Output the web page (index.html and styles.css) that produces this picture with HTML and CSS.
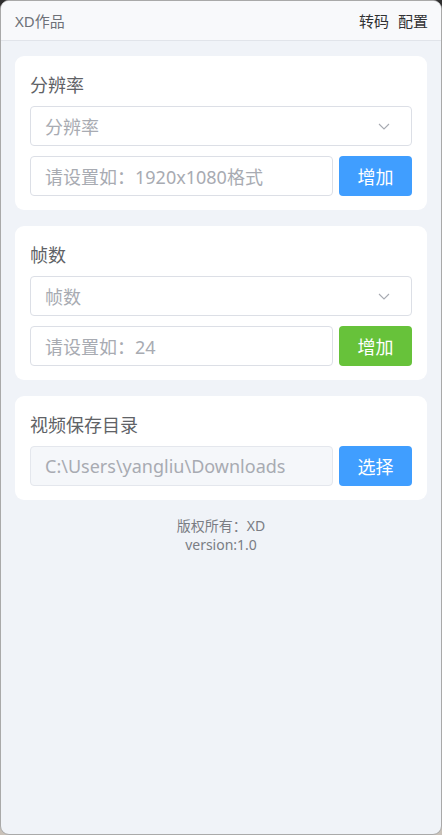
FILE: index.html
```html
<!DOCTYPE html>
<html lang="zh-CN">
<head>
<meta charset="utf-8">
<title>XD作品</title>
<link rel="stylesheet" href="styles.css">
</head>
<body>
<div class="window">
  <header class="topbar">
    <span class="brand">XD作品</span>
    <nav class="menu">
      <span class="menu-item">转码</span>
      <span class="menu-item">配置</span>
    </nav>
  </header>
  <main class="content">
    <section class="card">
      <div class="card-title">分辨率</div>
      <div class="select">
        <span class="placeholder">分辨率</span>
        <svg class="arrow" width="14" height="14" viewBox="0 0 14 14"><path d="M2 5l5 5 5-5" fill="none" stroke="#a8abb2" stroke-width="1.1"/></svg>
      </div>
      <div class="row">
        <div class="input"><span class="placeholder">请设置如：1920x1080格式</span></div>
        <button class="btn btn-blue">增加</button>
      </div>
    </section>
    <section class="card">
      <div class="card-title">帧数</div>
      <div class="select">
        <span class="placeholder">帧数</span>
        <svg class="arrow" width="14" height="14" viewBox="0 0 14 14"><path d="M2 5l5 5 5-5" fill="none" stroke="#a8abb2" stroke-width="1.1"/></svg>
      </div>
      <div class="row">
        <div class="input"><span class="placeholder">请设置如：24</span></div>
        <button class="btn btn-green">增加</button>
      </div>
    </section>
    <section class="card">
      <div class="card-title">视频保存目录</div>
      <div class="row">
        <div class="input disabled"><span class="placeholder">C:\Users\yangliu\Downloads</span></div>
        <button class="btn btn-blue">选择</button>
      </div>
    </section>
    <footer class="footer">
      <div>版权所有：XD</div>
      <div>version:1.0</div>
    </footer>
  </main>
</div>
</body>
</html>
```
FILE: styles.css
```css
html, body {
  margin: 0;
  padding: 0;
  height: 100%;
}
body {
  background: linear-gradient(to bottom, #2f2f2f 0, #2f2f2f 300px, #c4505c 300px, #c4505c 352px, #b7b0a8 352px, #c9c1b8 100%);
  font-family: "Noto Sans", "Noto Sans CJK SC", sans-serif;
}
.window {
  box-sizing: border-box;
  height: 835px;
  width: 442px;
  border: 1px solid #a9a9a9;
  border-radius: 9px;
  background: #f0f3f8;
  overflow: hidden;
  display: flex;
  flex-direction: column;
}
.topbar {
  height: 39px;
  flex: none;
  background: #f8f9fb;
  border-bottom: 1px solid #e1e4ea;
  display: flex;
  align-items: center;
  justify-content: space-between;
  padding: 0 13px 0 14px;
  font-size: 15px;
}
.brand {
  color: #6e7178;
}
.menu {
  display: flex;
  gap: 9px;
}
.menu-item {
  color: #303133;
}
.content {
  padding: 15px 14px 0;
  display: flex;
  flex-direction: column;
  gap: 16px;
}
.card {
  background: #fff;
  border-radius: 9px;
  padding: 15px 15px 14px;
  display: flex;
  flex-direction: column;
  gap: 10px;
}
.card-title {
  font-size: 18px;
  line-height: 28px;
  color: #606266;
  margin-bottom: -3px;
}
.select, .input {
  box-sizing: border-box;
  height: 40px;
  border: 1px solid #dcdfe6;
  border-radius: 4px;
  display: flex;
  align-items: center;
  padding: 0 14px;
  background: #fff;
}
.select {
  justify-content: space-between;
  padding-right: 20px;
}
.placeholder {
  font-size: 18px;
  color: #a8abb2;
  white-space: nowrap;
}
.row {
  display: flex;
  gap: 6px;
}
.input {
  flex: 1;
}
.input.disabled {
  background: #f5f7fa;
  border-color: #e4e7ed;
}
.btn {
  width: 73px;
  height: 40px;
  border: none;
  border-radius: 4px;
  color: #fff;
  font-family: inherit;
  font-size: 18px;
  padding: 0;
}
.btn-blue {
  background: #409eff;
}
.btn-green {
  background: #67c23a;
}
.footer {
  text-align: center;
  font-size: 14px;
  line-height: 19px;
  color: #7a7d84;
}
```
